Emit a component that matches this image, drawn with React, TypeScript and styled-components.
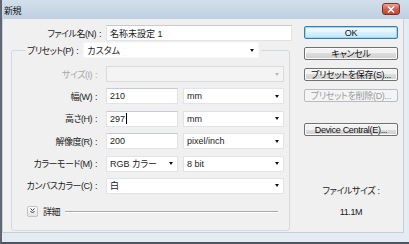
import styled, { createGlobalStyle } from 'styled-components'

const GlobalStyle = createGlobalStyle`
  html, body { margin: 0; padding: 0; background: #f0f0f0; }
  body {
    font-family: "Liberation Sans", "Noto Sans CJK JP", sans-serif;
    font-size: 9px;
    color: #222;
    font-feature-settings: "palt";
  }
`

const Window = styled.div`
  display: flex;
  flex-direction: column;
  width: 409px;
  height: 244px;
  box-sizing: border-box;
  background: #e4ebf2;
  border-left: 2px solid #5d6874;
  border-bottom: 2px solid #4b5662;
`
const TitleBar = styled.div`
  display: flex;
  align-items: flex-start;
  height: 19px;
  flex-shrink: 0;
  background: linear-gradient(#d3dfeb, #bfd0e1);
`
const Title = styled.span`
  margin: 4px 0 0 2px;
  font-size: 9px;
  letter-spacing: -0.5px;
  color: #101820;
`
const CloseButton = styled.div`
  display: flex;
  align-items: center;
  justify-content: center;
  width: 18px;
  height: 12px;
  margin: 3px 9px 0 auto;
  box-sizing: border-box;
  border: 1px solid #7d3029;
  border-radius: 3px;
  background: linear-gradient(#e9a69b, #cf5a48 55%, #c34632);
`
const Frame = styled.div`
  flex: 1;
  display: flex;
  padding: 0 5px 9px 0;
`
const Client = styled.div`
  flex: 1;
  display: flex;
  align-items: flex-start;
  padding: 6px 0 0 8px;
  background: #f0f0f0;
  border: 1px solid #c6ced7;
  border-top: none;
`
const LeftCol = styled.div`
  display: flex;
  flex-direction: column;
  width: 281px;
`
const FileRow = styled.div`
  display: grid;
  grid-template-columns: 95px 186px;
  align-items: center;
`
const Label = styled.span<{ $muted?: boolean }>`
  text-align: right;
  padding-right: 5px;
  letter-spacing: -0.5px;
  white-space: nowrap;
  color: ${p => (p.$muted ? '#a7a7a7' : '#222')};
`
const Colon = styled.span`
  margin-left: 3px;
`
const Field = styled.div`
  display: flex;
  align-items: center;
  height: 16px;
  box-sizing: border-box;
  padding: 0 3px;
  background: #fff;
  border: 1px solid #e0e4e9;
  border-top-color: #c4cbd3;
  white-space: nowrap;
`
const Combo = styled(Field)<{ $disabled?: boolean }>`
  justify-content: space-between;
  padding-right: 4px;
  background: ${p => (p.$disabled ? '#f4f4f4' : '#fff')};
  border-color: ${p => (p.$disabled ? '#dadada' : '#e0e4e9')};
`
const Arrow = styled.span<{ $muted?: boolean }>`
  width: 0;
  height: 0;
  border-left: 2.5px solid transparent;
  border-right: 2.5px solid transparent;
  border-top: 3px solid ${p => (p.$muted ? '#b8b8b8' : '#111')};
`
const Caret = styled.span`
  display: inline-block;
  width: 1px;
  height: 11px;
  margin-left: 1px;
  background: #000;
`
const GroupBox = styled.fieldset`
  margin: 1px 0 0 0;
  padding: 0 5px 12px 0;
  width: 279px;
  box-sizing: border-box;
  border: 1px solid #d2d9e0;
  border-radius: 3px;
`
const Legend = styled.legend`
  display: flex;
  align-items: center;
  width: 235px;
  box-sizing: border-box;
  margin-left: 14px;
  padding: 0 2px 0 1px;
`
const PresetCombo = styled(Combo)`
  flex: 1;
  border-color: #f6f6f6;
`
const Rows = styled.div`
  display: grid;
  grid-template-columns: 90px 1fr;
  column-gap: 4px;
  row-gap: 6.4px;
  align-items: center;
  padding-top: 8px;
`
const Pair = styled.div`
  display: grid;
  grid-template-columns: 72px 1fr;
  column-gap: 5px;
`
const DetailRow = styled.div`
  display: flex;
  align-items: center;
  gap: 5px;
  margin-top: 11px;
  padding: 0 6px 0 15px;
`
const ToggleButton = styled.div`
  display: flex;
  align-items: center;
  justify-content: center;
  width: 11px;
  height: 11px;
  box-sizing: border-box;
  border: 1px solid #c3c3c3;
  border-radius: 2px;
  background: linear-gradient(#fdfdfd, #e2e2e2);
`
const DetailText = styled.span`
  letter-spacing: -0.4px;
`
const Rule = styled.div`
  flex: 1;
  height: 1px;
  background: #a9a9a9;
  box-shadow: 0 1px 0 #fff;
`
const RightCol = styled.div`
  display: flex;
  flex-direction: column;
  gap: 8px;
  width: 94px;
  margin: 1px 0 0 12px;
`
const Button = styled.div<{ $default?: boolean; $disabled?: boolean; $gap?: number }>`
  display: flex;
  align-items: center;
  justify-content: center;
  height: 13px;
  margin-top: ${p => p.$gap ?? 0}px;
  box-sizing: border-box;
  border: 1px solid ${p => (p.$default ? '#3d7bad' : p.$disabled ? '#b8bcc0' : '#707070')};
  border-radius: 2px;
  background: ${p =>
    p.$disabled
      ? '#f4f4f4'
      : p.$default
        ? 'linear-gradient(#eaf6fd 50%, #d9f0fc 50%, #bee6fd)'
        : 'linear-gradient(#f2f2f2 50%, #dddddd 50%, #cfcfcf)'};
  box-shadow: inset 0 0 0 1px ${p => (p.$default ? '#9fd5f5' : p.$disabled ? '#f4f4f4' : '#fcfcfc')};
  color: ${p => (p.$disabled ? '#9a9a9a' : '#111')};
  letter-spacing: -0.3px;
  white-space: nowrap;
`
const FileSize = styled.div`
  display: flex;
  flex-direction: column;
  align-items: center;
  gap: 9px;
  margin-top: 41px;
  line-height: 12px;
  letter-spacing: -0.4px;
`

const rows = {
  size: 'サイズ(I)',
  width: '幅(W)',
  height: '高さ(H)',
  res: '解像度(R)',
  mode: 'カラーモード(M)',
  canvas: 'カンバスカラー(C)',
}

function FormLabel({ text, muted }: { text: string; muted?: boolean }) {
  return (
    <Label $muted={muted}>
      {text}
      <Colon>:</Colon>
    </Label>
  )
}

export default function App() {
  return (
    <>
      <GlobalStyle />
      <Window>
        <TitleBar>
          <Title>新規</Title>
          <CloseButton>
            <svg width="8" height="7" viewBox="0 0 8 7">
              <path d="M1 0.5 L7 6.5 M7 0.5 L1 6.5" stroke="#fff" strokeWidth="1.6" />
            </svg>
          </CloseButton>
        </TitleBar>
        <Frame>
          <Client>
            <LeftCol>
              <FileRow>
                <FormLabel text="ファイル名(N)" />
                <Field>名称未設定 1</Field>
              </FileRow>
              <GroupBox>
                <Legend>
                  <FormLabel text="プリセット(P)" />
                  <PresetCombo>
                    カスタム
                    <Arrow />
                  </PresetCombo>
                </Legend>
                <Rows>
                  <FormLabel text={rows.size} muted />
                  <Combo $disabled>
                    <span />
                    <Arrow $muted />
                  </Combo>

                  <FormLabel text={rows.width} />
                  <Pair>
                    <Field>210</Field>
                    <Combo>
                      mm
                      <Arrow />
                    </Combo>
                  </Pair>

                  <FormLabel text={rows.height} />
                  <Pair>
                    <Field>
                      297
                      <Caret />
                    </Field>
                    <Combo>
                      mm
                      <Arrow />
                    </Combo>
                  </Pair>

                  <FormLabel text={rows.res} />
                  <Pair>
                    <Field>200</Field>
                    <Combo>
                      pixel/inch
                      <Arrow />
                    </Combo>
                  </Pair>

                  <FormLabel text={rows.mode} />
                  <Pair>
                    <Combo>
                      RGB カラー
                      <Arrow />
                    </Combo>
                    <Combo>
                      8 bit
                      <Arrow />
                    </Combo>
                  </Pair>

                  <FormLabel text={rows.canvas} />
                  <Combo>
                    白
                    <Arrow />
                  </Combo>
                </Rows>
                <DetailRow>
                  <ToggleButton>
                    <svg width="5" height="6" viewBox="0 0 5 6">
                      <path d="M0.5 0.5 L2.5 2.5 L4.5 0.5 M0.5 3 L2.5 5 L4.5 3" fill="none" stroke="#333" strokeWidth="1" />
                    </svg>
                  </ToggleButton>
                  <DetailText>詳細</DetailText>
                  <Rule />
                </DetailRow>
              </GroupBox>
            </LeftCol>
            <RightCol>
              <Button $default>OK</Button>
              <Button>キャンセル</Button>
              <Button>プリセットを保存(S)...</Button>
              <Button $disabled>プリセットを削除(D)...</Button>
              <Button $gap={13}>Device Central(E)...</Button>
              <FileSize>
                <span>ファイルサイズ :</span>
                <span>11.1M</span>
              </FileSize>
            </RightCol>
          </Client>
        </Frame>
      </Window>
    </>
  )
}
